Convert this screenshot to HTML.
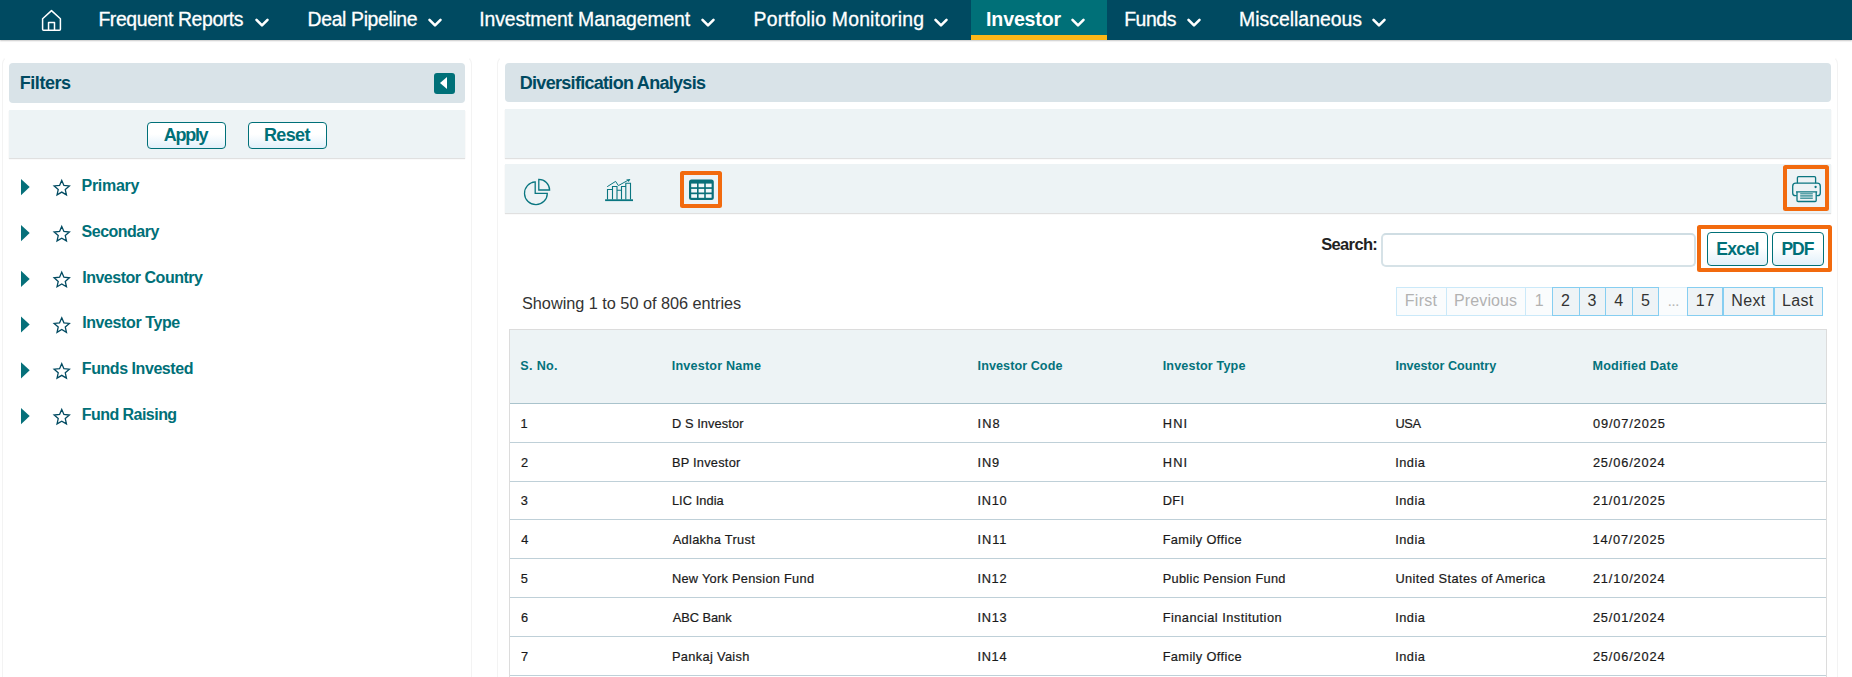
<!DOCTYPE html>
<html><head><meta charset="utf-8">
<style>
*{box-sizing:border-box;margin:0;padding:0}
html,body{width:1852px;height:677px;overflow:hidden;background:#fff;font-family:"Liberation Sans",sans-serif;}
.a{position:absolute}
.t{position:absolute;white-space:nowrap;line-height:1;font-family:"Liberation Sans",sans-serif}
#nav{left:0;top:0;width:1852px;height:40px;background:#004a61;box-shadow:0 1px 1.5px rgba(0,0,0,.22)}
#act{left:971px;top:0;width:136px;height:40px;background:#007078;border-bottom:5px solid #fbb818}
.panel{border:1px solid #f3f3f3;border-top-color:transparent;border-radius:8px 8px 0 0;border-bottom:0}
.hdr{background:#d9e3e8;border-radius:4px}
.bar{background:#edf3f5;box-shadow:0 1px 1px rgba(0,0,0,.12)}
.btn{border:1px solid #007078;border-radius:4px;background:linear-gradient(#fff 45%,#e1f0fa)}
.ob{border:4px solid #f26a0e;border-radius:2.5px}
.pg{top:287px;height:29px;border:1px solid #86cef1;background:#eef3f6}
.pg.d{border-color:#cbe9f9;background:#fafcfd}
.rl{left:510px;width:1316px;height:1px;background:#bfd0d8}
</style></head><body>
<div id="nav" class="a"></div>
<div id="act" class="a"></div>
<!-- home -->
<svg class="a" style="left:40px;top:8px" width="24" height="24" viewBox="0 0 24 24" fill="none" stroke="#fff" stroke-width="1.5" stroke-linejoin="round" stroke-linecap="round"><path d="M2.6 10.8 L11.5 2.6 L20.4 10.8 V21.2 Q20.4 22.2 19.4 22.2 H3.6 Q2.6 22.2 2.6 21.2 Z"/><path d="M8.55 22 V14.6 H14.5 V22"/></svg>
<!-- chevrons -->
<svg class="a" style="left:0;top:0" width="1400" height="40" fill="none" stroke="#fff" stroke-width="2.6" stroke-linecap="round" stroke-linejoin="round">
<path d="M256.5 19.9 l5.5 5.5 l5.5 -5.5"/><path d="M429.5 19.9 l5.5 5.5 l5.5 -5.5"/><path d="M702.5 19.9 l5.5 5.5 l5.5 -5.5"/><path d="M935.5 19.9 l5.5 5.5 l5.5 -5.5"/><path d="M1072.5 19.9 l5.5 5.5 l5.5 -5.5"/><path d="M1188.5 19.9 l5.5 5.5 l5.5 -5.5"/><path d="M1373.5 19.9 l5.5 5.5 l5.5 -5.5"/>
</svg>
<!-- panels -->
<div class="a panel" style="left:2px;top:56px;width:470px;height:640px"></div>
<div class="a panel" style="left:497px;top:56px;width:1341px;height:640px"></div>
<div class="a hdr" style="left:9px;top:63px;width:456px;height:40px"></div>
<div class="a hdr" style="left:505px;top:63px;width:1326px;height:39px"></div>
<div class="a" style="left:434px;top:73px;width:21px;height:21px;background:#007078;border-radius:3px"></div>
<div class="a" style="left:440px;top:76.6px;width:0;height:0;border-right:7.6px solid #fff;border-top:6.9px solid transparent;border-bottom:6.9px solid transparent"></div>
<div class="a bar" style="left:9px;top:110px;width:456px;height:48px"></div>
<div class="a bar" style="left:505px;top:109px;width:1326px;height:49px"></div>
<div class="a bar" style="left:505px;top:164px;width:1326px;height:49px"></div>
<div class="a btn" style="left:147px;top:122px;width:79px;height:27px"></div>
<div class="a btn" style="left:248px;top:122px;width:79px;height:27px"></div>
<svg class="a" style="left:0;top:170px" width="80" height="260" viewBox="0 170 80 260">
<polygon points="21,178.95 29.7,187.05 21,195.15" fill="#06707a"/>
<polygon points="61.75,180.40 63.92,185.41 69.36,185.93 65.27,189.54 66.45,194.87 61.75,192.10 57.05,194.87 58.23,189.54 54.14,185.93 59.58,185.41" fill="none" stroke="#004a61" stroke-width="1.3"/>
<polygon points="21,225.00 29.7,233.10 21,241.20" fill="#06707a"/>
<polygon points="61.75,226.45 63.92,231.46 69.36,231.98 65.27,235.59 66.45,240.92 61.75,238.15 57.05,240.92 58.23,235.59 54.14,231.98 59.58,231.46" fill="none" stroke="#004a61" stroke-width="1.3"/>
<polygon points="21,270.80 29.7,278.90 21,287.00" fill="#06707a"/>
<polygon points="61.75,272.25 63.92,277.26 69.36,277.78 65.27,281.39 66.45,286.72 61.75,283.95 57.05,286.72 58.23,281.39 54.14,277.78 59.58,277.26" fill="none" stroke="#004a61" stroke-width="1.3"/>
<polygon points="21,316.40 29.7,324.50 21,332.60" fill="#06707a"/>
<polygon points="61.75,317.85 63.92,322.86 69.36,323.38 65.27,326.99 66.45,332.32 61.75,329.55 57.05,332.32 58.23,326.99 54.14,323.38 59.58,322.86" fill="none" stroke="#004a61" stroke-width="1.3"/>
<polygon points="21,362.20 29.7,370.30 21,378.40" fill="#06707a"/>
<polygon points="61.75,363.65 63.92,368.66 69.36,369.18 65.27,372.79 66.45,378.12 61.75,375.35 57.05,378.12 58.23,372.79 54.14,369.18 59.58,368.66" fill="none" stroke="#004a61" stroke-width="1.3"/>
<polygon points="21,408.00 29.7,416.10 21,424.20" fill="#06707a"/>
<polygon points="61.75,409.45 63.92,414.46 69.36,414.98 65.27,418.59 66.45,423.92 61.75,421.15 57.05,423.92 58.23,418.59 54.14,414.98 59.58,414.46" fill="none" stroke="#004a61" stroke-width="1.3"/>
</svg>
<!-- icon bar -->
<svg class="a" style="left:520px;top:175px" width="36" height="34" viewBox="520 175 36 34" fill="none" stroke="#0a7680" stroke-width="1.3">
<path d="M535.2 181.9 A11.4 11.4 0 1 0 547.3 193.4 H535.2 Z"/>
<path d="M538.8 179.3 A10.8 10.8 0 0 1 549.6 190 H538.8 Z"/>
</svg>
<svg class="a" style="left:600px;top:175px" width="40" height="30" viewBox="600 175 40 30" fill="none" stroke="#0a7680" stroke-width="1.1">
<path d="M605.1 200.2 H633" stroke-width="1.8"/>
<path d="M607.5 199.5 V189.5 H612.5 V199.5 M612.5 189.5 V186.5 H617 V199.5 M617 190.2 H621.5 V199.5 M621.5 190.2 V186.5 H625.8 V199.5 M625.8 186.5 V183.3 H630.5 V199.5"/>
<path d="M607.2 186.7 L615.6 181.4 L618.4 185.6 L627.8 180.4" stroke-width="1"/>
<path d="M626.2 179.4 L630.4 179.1 L628.8 182 Z" fill="#0a7680" stroke="none"/>
</svg>
<div class="a ob" style="left:680px;top:171px;width:42px;height:37px"></div>
<svg class="a" style="left:688px;top:178px" width="28" height="24" viewBox="688 178 28 24">
<rect x="689" y="179.5" width="24.8" height="20.5" rx="2.5" fill="#0a6f79"/>
<g fill="#f2f7f9"><rect x="691.2" y="183.6" width="5.8" height="3.6"/><rect x="698.6" y="183.6" width="5.6" height="3.6"/><rect x="705.8" y="183.6" width="5.8" height="3.6"/>
<rect x="691.2" y="188.9" width="5.8" height="3.6"/><rect x="698.6" y="188.9" width="5.6" height="3.6"/><rect x="705.8" y="188.9" width="5.8" height="3.6"/>
<rect x="691.2" y="194.2" width="5.8" height="3.6"/><rect x="698.6" y="194.2" width="5.6" height="3.6"/><rect x="705.8" y="194.2" width="5.8" height="3.6"/></g>
</svg>
<div class="a ob" style="left:1783px;top:165px;width:46px;height:46px"></div>
<!-- printer -->
<svg class="a" style="left:1788px;top:172px" width="36" height="34" viewBox="1788 172 36 34" fill="none" stroke="#0a7680" stroke-width="1.3" stroke-linejoin="round">
<path d="M1797.4 183.2 V177.8 Q1797.4 176.7 1798.5 176.7 H1814.5 Q1815.6 176.7 1815.6 177.8 V183.2"/>
<path d="M1796.8 195.6 H1795.4 Q1792.7 195.6 1792.7 192.9 V186.3 Q1792.7 183.2 1795.8 183.2 H1817.2 Q1820.3 183.2 1820.3 186.3 V192.9 Q1820.3 195.6 1817.6 195.6 H1816.4"/>
<path d="M1796 191.8 H1817.2 M1797 191.8 V200.4 Q1797 201.5 1798.1 201.5 H1815.1 Q1816.2 201.5 1816.2 200.4 V191.8"/>
<path d="M1800.2 193.7 H1812.8 M1800.2 195.3 H1812.8 M1800.2 196.9 H1812.8 M1800.2 198.4 H1812.8" stroke-width="1" opacity=".8"/>
<circle cx="1815.6" cy="187" r="1.15" fill="#0a7680" stroke="none"/>
</svg>
<!-- search -->
<div class="a" style="left:1381px;top:233px;width:315px;height:34px;border:2px solid #d6e2e7;border-top-color:#cfdde3;border-radius:5px;background:#fff"></div>
<div class="a ob" style="left:1697px;top:225px;width:135px;height:47px"></div>
<div class="a btn" style="left:1707px;top:232px;width:61px;height:34px"></div>
<div class="a btn" style="left:1772px;top:232px;width:52px;height:34px"></div>
<!-- pagination -->
<div class="a pg d" style="left:1396px;width:51px"></div>
<div class="a pg d" style="left:1446px;width:80px"></div>
<div class="a pg d" style="left:1525px;width:28px"></div>
<div class="a pg d" style="left:1658px;width:30px;border-color:#def0fa transparent"></div>
<div class="a pg" style="left:1552px;width:28px"></div>
<div class="a pg" style="left:1579px;width:27px"></div>
<div class="a pg" style="left:1605px;width:28px"></div>
<div class="a pg" style="left:1632px;width:27px"></div>
<div class="a pg" style="left:1687px;width:36px"></div>
<div class="a pg" style="left:1723px;width:51px"></div>
<div class="a pg" style="left:1774px;width:49px"></div>
<!-- table -->
<div class="a" style="left:509px;top:329px;width:1318px;height:360px;border:1px solid #dcdcdc"></div>
<div class="a" style="left:510px;top:330px;width:1316px;height:73px;background:#edf3f5"></div>
<div class="a rl" style="top:403px;background:#a9c3cc"></div>
<div class="a rl" style="top:442px"></div>
<div class="a rl" style="top:481px"></div>
<div class="a rl" style="top:519px"></div>
<div class="a rl" style="top:558px"></div>
<div class="a rl" style="top:597px"></div>
<div class="a rl" style="top:636px"></div>
<div class="a rl" style="top:675px"></div>
<span class="t" style="left:98.42px;top:10px;font-size:19.4px;color:#ffffff;letter-spacing:-0.383px;-webkit-text-stroke:0.3px #ffffff">Frequent Reports</span>
<span class="t" style="left:307.62px;top:10px;font-size:19.4px;color:#ffffff;letter-spacing:-0.358px;-webkit-text-stroke:0.3px #ffffff">Deal Pipeline</span>
<span class="t" style="left:479.37px;top:10px;font-size:19.4px;color:#ffffff;letter-spacing:-0.134px;-webkit-text-stroke:0.3px #ffffff">Investment Management</span>
<span class="t" style="left:753.62px;top:10px;font-size:19.4px;color:#ffffff;letter-spacing:0.172px;-webkit-text-stroke:0.3px #ffffff">Portfolio Monitoring</span>
<span class="t" style="left:986.08px;top:10px;font-size:19.6px;color:#ffffff;font-weight:700;letter-spacing:-0.169px">Investor</span>
<span class="t" style="left:1124.22px;top:10px;font-size:19.4px;color:#ffffff;letter-spacing:-0.445px;-webkit-text-stroke:0.3px #ffffff">Funds</span>
<span class="t" style="left:1239.02px;top:10px;font-size:19.4px;color:#ffffff;letter-spacing:0.015px;-webkit-text-stroke:0.3px #ffffff">Miscellaneous</span>
<span class="t" style="left:19.78px;top:74px;font-size:18px;color:#004a61;font-weight:700;letter-spacing:-0.458px">Filters</span>
<span class="t" style="left:519.78px;top:74px;font-size:18px;color:#004a61;font-weight:700;letter-spacing:-0.704px">Diversification Analysis</span>
<span class="t" style="left:163.75px;top:126px;font-size:18px;color:#007078;font-weight:700;letter-spacing:-1.282px">Apply</span>
<span class="t" style="left:263.88px;top:126px;font-size:18px;color:#007078;font-weight:700;letter-spacing:-0.606px">Reset</span>
<span class="t" style="left:81.60px;top:178px;font-size:16px;color:#007078;font-weight:700;letter-spacing:-0.311px">Primary</span>
<span class="t" style="left:81.60px;top:224px;font-size:16px;color:#007078;font-weight:700;letter-spacing:-0.503px">Secondary</span>
<span class="t" style="left:82.20px;top:270px;font-size:16px;color:#007078;font-weight:700;letter-spacing:-0.482px">Investor Country</span>
<span class="t" style="left:82.20px;top:315px;font-size:16px;color:#007078;font-weight:700;letter-spacing:-0.400px">Investor Type</span>
<span class="t" style="left:81.80px;top:361px;font-size:16px;color:#007078;font-weight:700;letter-spacing:-0.439px">Funds Invested</span>
<span class="t" style="left:81.80px;top:407px;font-size:16px;color:#007078;font-weight:700;letter-spacing:-0.545px">Fund Raising</span>
<span class="t" style="left:1321.20px;top:236px;font-size:16.5px;color:#222;font-weight:700;letter-spacing:-0.645px">Search:</span>
<span class="t" style="left:1716.22px;top:241px;font-size:17.5px;color:#007078;font-weight:700;letter-spacing:-0.627px">Excel</span>
<span class="t" style="left:1781.52px;top:241px;font-size:17.5px;color:#007078;font-weight:700;letter-spacing:-1.082px">PDF</span>
<span class="t" style="left:522.00px;top:295px;font-size:16.3px;color:#333;letter-spacing:-0.024px">Showing 1 to 50 of 806 entries</span>
<span class="t" style="left:1404.80px;top:293px;font-size:16px;color:#b2b2b2;letter-spacing:0.292px">First</span>
<span class="t" style="left:1454.10px;top:293px;font-size:16px;color:#b2b2b2;letter-spacing:0.109px">Previous</span>
<span class="t" style="left:1534.68px;top:293px;font-size:16px;color:#b2b2b2">1</span>
<span class="t" style="left:1561.00px;top:293px;font-size:16px;color:#333">2</span>
<span class="t" style="left:1587.50px;top:293px;font-size:16px;color:#333">3</span>
<span class="t" style="left:1614.36px;top:293px;font-size:16px;color:#333">4</span>
<span class="t" style="left:1641.00px;top:293px;font-size:16px;color:#333">5</span>
<span class="t" style="left:1695.68px;top:293px;font-size:16px;color:#333;letter-spacing:0.837px">17</span>
<span class="t" style="left:1731.30px;top:293px;font-size:16px;color:#333;letter-spacing:0.341px">Next</span>
<span class="t" style="left:1782.10px;top:293px;font-size:16px;color:#333;letter-spacing:0.270px">Last</span>
<span class="t" style="left:1668.20px;top:297px;font-size:11px;color:#b8b8b8;font-weight:700;letter-spacing:0.679px">...</span>
<span class="t" style="left:520.30px;top:360px;font-size:12.6px;color:#04727c;font-weight:700;letter-spacing:0.325px">S. No.</span>
<span class="t" style="left:671.80px;top:360px;font-size:12.6px;color:#04727c;font-weight:700;letter-spacing:0.193px">Investor Name</span>
<span class="t" style="left:977.60px;top:360px;font-size:12.6px;color:#04727c;font-weight:700;letter-spacing:0.069px">Investor Code</span>
<span class="t" style="left:1162.70px;top:360px;font-size:12.6px;color:#04727c;font-weight:700;letter-spacing:0.148px">Investor Type</span>
<span class="t" style="left:1395.40px;top:360px;font-size:12.6px;color:#04727c;font-weight:700;letter-spacing:0.003px">Investor Country</span>
<span class="t" style="left:1592.40px;top:360px;font-size:12.6px;color:#04727c;font-weight:700;letter-spacing:0.251px">Modified Date</span>
<span class="t" style="left:520.50px;top:418px;font-size:12.8px;color:#1a1a1a;-webkit-text-stroke:0.2px #1a1a1a">1</span>
<span class="t" style="left:671.90px;top:418px;font-size:12.8px;color:#1a1a1a;letter-spacing:0.107px;-webkit-text-stroke:0.2px #1a1a1a">D S Investor</span>
<span class="t" style="left:977.42px;top:418px;font-size:12.8px;color:#1a1a1a;letter-spacing:1.183px;-webkit-text-stroke:0.2px #1a1a1a">IN8</span>
<span class="t" style="left:1162.70px;top:418px;font-size:12.8px;color:#1a1a1a;letter-spacing:1.211px;-webkit-text-stroke:0.2px #1a1a1a">HNI</span>
<span class="t" style="left:1395.40px;top:418px;font-size:12.8px;color:#1a1a1a;letter-spacing:-0.278px;-webkit-text-stroke:0.2px #1a1a1a">USA</span>
<span class="t" style="left:1592.93px;top:418px;font-size:12.8px;color:#1a1a1a;letter-spacing:0.867px;-webkit-text-stroke:0.2px #1a1a1a">09/07/2025</span>
<span class="t" style="left:521.00px;top:457px;font-size:12.8px;color:#1a1a1a;-webkit-text-stroke:0.2px #1a1a1a">2</span>
<span class="t" style="left:671.90px;top:457px;font-size:12.8px;color:#1a1a1a;letter-spacing:0.248px;-webkit-text-stroke:0.2px #1a1a1a">BP Investor</span>
<span class="t" style="left:977.42px;top:457px;font-size:12.8px;color:#1a1a1a;letter-spacing:0.945px;-webkit-text-stroke:0.2px #1a1a1a">IN9</span>
<span class="t" style="left:1162.70px;top:457px;font-size:12.8px;color:#1a1a1a;letter-spacing:1.211px;-webkit-text-stroke:0.2px #1a1a1a">HNI</span>
<span class="t" style="left:1395.22px;top:457px;font-size:12.8px;color:#1a1a1a;letter-spacing:0.482px;-webkit-text-stroke:0.2px #1a1a1a">India</span>
<span class="t" style="left:1592.90px;top:457px;font-size:12.8px;color:#1a1a1a;letter-spacing:0.850px;-webkit-text-stroke:0.2px #1a1a1a">25/06/2024</span>
<span class="t" style="left:520.84px;top:495px;font-size:12.8px;color:#1a1a1a;-webkit-text-stroke:0.2px #1a1a1a">3</span>
<span class="t" style="left:671.90px;top:495px;font-size:12.8px;color:#1a1a1a;letter-spacing:0.074px;-webkit-text-stroke:0.2px #1a1a1a">LIC India</span>
<span class="t" style="left:977.42px;top:495px;font-size:12.8px;color:#1a1a1a;letter-spacing:0.734px;-webkit-text-stroke:0.2px #1a1a1a">IN10</span>
<span class="t" style="left:1162.70px;top:495px;font-size:12.8px;color:#1a1a1a;letter-spacing:0.344px;-webkit-text-stroke:0.2px #1a1a1a">DFI</span>
<span class="t" style="left:1395.22px;top:495px;font-size:12.8px;color:#1a1a1a;letter-spacing:0.482px;-webkit-text-stroke:0.2px #1a1a1a">India</span>
<span class="t" style="left:1592.90px;top:495px;font-size:12.8px;color:#1a1a1a;letter-spacing:0.871px;-webkit-text-stroke:0.2px #1a1a1a">21/01/2025</span>
<span class="t" style="left:521.37px;top:534px;font-size:12.8px;color:#1a1a1a;-webkit-text-stroke:0.2px #1a1a1a">4</span>
<span class="t" style="left:672.75px;top:534px;font-size:12.8px;color:#1a1a1a;letter-spacing:0.308px;-webkit-text-stroke:0.2px #1a1a1a">Adlakha Trust</span>
<span class="t" style="left:977.42px;top:534px;font-size:12.8px;color:#1a1a1a;letter-spacing:0.975px;-webkit-text-stroke:0.2px #1a1a1a">IN11</span>
<span class="t" style="left:1162.70px;top:534px;font-size:12.8px;color:#1a1a1a;letter-spacing:0.369px;-webkit-text-stroke:0.2px #1a1a1a">Family Office</span>
<span class="t" style="left:1395.22px;top:534px;font-size:12.8px;color:#1a1a1a;letter-spacing:0.482px;-webkit-text-stroke:0.2px #1a1a1a">India</span>
<span class="t" style="left:1592.40px;top:534px;font-size:12.8px;color:#1a1a1a;letter-spacing:0.921px;-webkit-text-stroke:0.2px #1a1a1a">14/07/2025</span>
<span class="t" style="left:520.76px;top:573px;font-size:12.8px;color:#1a1a1a;-webkit-text-stroke:0.2px #1a1a1a">5</span>
<span class="t" style="left:671.90px;top:573px;font-size:12.8px;color:#1a1a1a;letter-spacing:0.277px;-webkit-text-stroke:0.2px #1a1a1a">New York Pension Fund</span>
<span class="t" style="left:977.42px;top:573px;font-size:12.8px;color:#1a1a1a;letter-spacing:0.696px;-webkit-text-stroke:0.2px #1a1a1a">IN12</span>
<span class="t" style="left:1162.70px;top:573px;font-size:12.8px;color:#1a1a1a;letter-spacing:0.299px;-webkit-text-stroke:0.2px #1a1a1a">Public Pension Fund</span>
<span class="t" style="left:1395.40px;top:573px;font-size:12.8px;color:#1a1a1a;letter-spacing:0.384px;-webkit-text-stroke:0.2px #1a1a1a">United States of America</span>
<span class="t" style="left:1592.90px;top:573px;font-size:12.8px;color:#1a1a1a;letter-spacing:0.850px;-webkit-text-stroke:0.2px #1a1a1a">21/10/2024</span>
<span class="t" style="left:521.01px;top:612px;font-size:12.8px;color:#1a1a1a;-webkit-text-stroke:0.2px #1a1a1a">6</span>
<span class="t" style="left:672.75px;top:612px;font-size:12.8px;color:#1a1a1a;letter-spacing:-0.035px;-webkit-text-stroke:0.2px #1a1a1a">ABC Bank</span>
<span class="t" style="left:977.42px;top:612px;font-size:12.8px;color:#1a1a1a;letter-spacing:0.711px;-webkit-text-stroke:0.2px #1a1a1a">IN13</span>
<span class="t" style="left:1162.70px;top:612px;font-size:12.8px;color:#1a1a1a;letter-spacing:0.470px;-webkit-text-stroke:0.2px #1a1a1a">Financial Institution</span>
<span class="t" style="left:1395.22px;top:612px;font-size:12.8px;color:#1a1a1a;letter-spacing:0.482px;-webkit-text-stroke:0.2px #1a1a1a">India</span>
<span class="t" style="left:1592.90px;top:612px;font-size:12.8px;color:#1a1a1a;letter-spacing:0.850px;-webkit-text-stroke:0.2px #1a1a1a">25/01/2024</span>
<span class="t" style="left:521.09px;top:651px;font-size:12.8px;color:#1a1a1a;-webkit-text-stroke:0.2px #1a1a1a">7</span>
<span class="t" style="left:671.90px;top:651px;font-size:12.8px;color:#1a1a1a;letter-spacing:0.343px;-webkit-text-stroke:0.2px #1a1a1a">Pankaj Vaish</span>
<span class="t" style="left:977.42px;top:651px;font-size:12.8px;color:#1a1a1a;letter-spacing:0.695px;-webkit-text-stroke:0.2px #1a1a1a">IN14</span>
<span class="t" style="left:1162.70px;top:651px;font-size:12.8px;color:#1a1a1a;letter-spacing:0.369px;-webkit-text-stroke:0.2px #1a1a1a">Family Office</span>
<span class="t" style="left:1395.22px;top:651px;font-size:12.8px;color:#1a1a1a;letter-spacing:0.482px;-webkit-text-stroke:0.2px #1a1a1a">India</span>
<span class="t" style="left:1592.90px;top:651px;font-size:12.8px;color:#1a1a1a;letter-spacing:0.850px;-webkit-text-stroke:0.2px #1a1a1a">25/06/2024</span>
</body></html>
